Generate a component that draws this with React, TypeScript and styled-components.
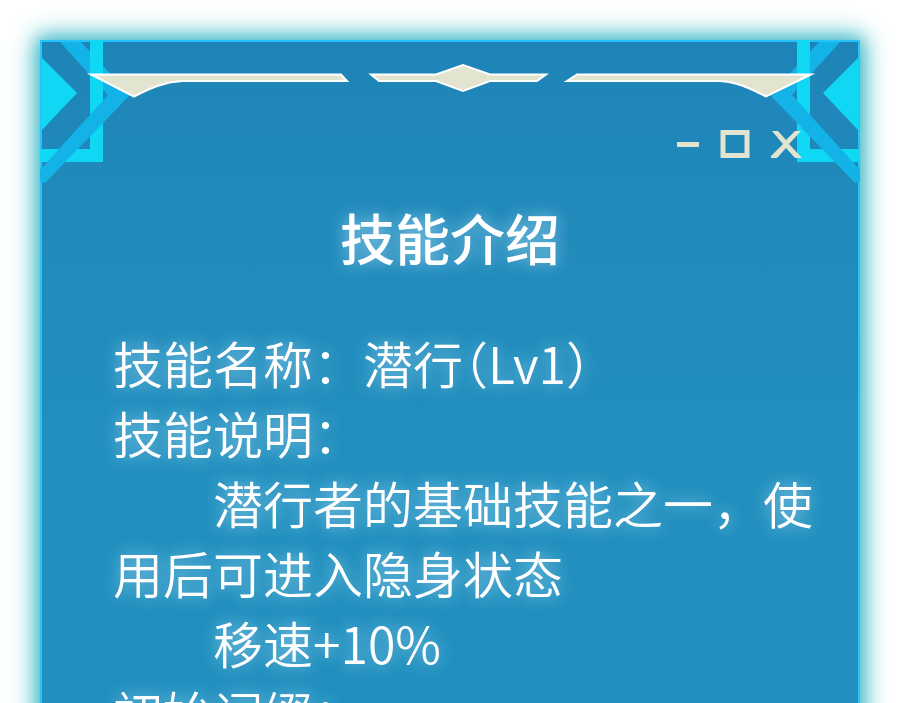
import React from "react";
import styled, { createGlobalStyle } from "styled-components";

const CREAM = "#e3e4d0";

const GlobalStyle = createGlobalStyle`
  * { box-sizing: border-box; }
  body {
    margin: 0;
    background: #ffffff;
    font-family: "Noto Sans CJK SC", "Noto Sans", sans-serif;
  }
`;

const Page = styled.div`
  height: 100vh;
  padding: 40px 40px 0;
  overflow: hidden;
`;

const Panel = styled.main`
  position: relative;
  min-height: 100vh;
  border: 2px solid #25c3fa;
  background: linear-gradient(#1e84b7 0, #208abb 160px, #2190bf 420px);
  box-shadow:
    0 0 12px 2px rgba(60, 175, 190, 0.5),
    0 0 24px 4px #3fbecd;
`;

const Corner = styled.svg<{ $flipped?: boolean }>`
  position: absolute;
  top: -2px;
  ${(p) => (p.$flipped ? "right: -2px;" : "left: -2px;")}
  width: 96px;
  height: 148px;
  transform: ${(p) => (p.$flipped ? "scaleX(-1)" : "none")};
`;

const Header = styled.header`
  position: relative;
  display: flex;
  flex-direction: column;
  padding: 20px 42px 0;
`;

const Ornament = styled.svg`
  display: block;
  width: 100%;
  overflow: visible;
`;

const Controls = styled.div`
  display: flex;
  justify-content: flex-end;
  gap: 20px;
  margin-top: 28px;
  padding-right: 14px;
`;

const ControlButton = styled.button<{ $width: number }>`
  display: flex;
  align-items: center;
  justify-content: center;
  width: ${(p) => p.$width}px;
  height: 32px;
  padding: 0;
  border: 0;
  background: none;
  cursor: pointer;
`;

const Title = styled.h1`
  margin: 41px 0 0;
  color: #ffffff;
  font-size: 55px;
  font-weight: 500;
  line-height: 70px;
  text-align: center;
  text-shadow: 0 0 16px rgba(190, 230, 250, 0.7);
`;

const Body = styled.section`
  padding: 56px 44px 40px 71px;
  color: #ffffff;
  font-size: 50px;
  font-weight: 350;
  line-height: 70px;
  text-shadow: 0 0 16px rgba(190, 230, 250, 0.7);
`;

const Line = styled.p<{ $indent?: boolean }>`
  margin: 0;
  text-indent: ${(p) => (p.$indent ? "2em" : "0")};
`;

const HalfWidth = styled.span`
  font-feature-settings: "halt";
`;

function CornerArt({ flipped }: { flipped?: boolean }) {
  return (
    <Corner $flipped={flipped} viewBox="0 0 96 148" aria-hidden="true">
      <path d="M20 2H41L90 55H68Z" fill="#13b3e8" />
      <path d="M1 17L37 53L1 91Z" fill="#10d8f4" />
      <path d="M50 0H63V122H0V109H50Z" fill="#10d8f4" />
      <path d="M68 55H90L5 143L0 141V130Z" fill="#13b3e8" />
    </Corner>
  );
}

export default function App() {
  return (
    <>
      <GlobalStyle />
      <Page lang="zh-CN">
        <Panel>
          <CornerArt />
          <CornerArt flipped />
          <Header>
            <Ornament viewBox="84 62 732 38" aria-hidden="true">
              <g fill={CREAM} stroke="#ffffff" strokeWidth="2" strokeMiterlimit="10">
                <path d="M91 74.5H341L347 81H182C164 82 150 88 134 96.5Z" />
                <path d="M371 74.5H436L463 65L490 74.5H546L537 81H490L463 91L436 81H379Z" />
                <path d="M811 74.5H577L567 81H719C737 82 750 88 766 96.5Z" />
              </g>
            </Ornament>
            <Controls>
              <ControlButton type="button" aria-label="最小化" $width={24}>
                <svg width="24" height="32" viewBox="0 0 24 32">
                  <path d="M1 16.5H23" stroke={CREAM} strokeWidth="5" />
                </svg>
              </ControlButton>
              <ControlButton type="button" aria-label="最大化" $width={30}>
                <svg width="30" height="32" viewBox="0 0 30 32">
                  <rect x="3" y="4.5" width="24" height="23" fill="none" stroke={CREAM} strokeWidth="5" />
                </svg>
              </ControlButton>
              <ControlButton type="button" aria-label="关闭" $width={32}>
                <svg width="32" height="32" viewBox="0 0 32 32">
                  <path
                    d="M2 3H8L16 12L25 3H31L19 16L32 30H25L16 20L7 30H1V28L13 16Z"
                    fill={CREAM}
                  />
                </svg>
              </ControlButton>
            </Controls>
          </Header>
          <Title>技能介绍</Title>
          <Body>
            <Line>
              技能名称：潜行<HalfWidth>（</HalfWidth>Lv1<HalfWidth>）</HalfWidth>
            </Line>
            <Line>技能说明：</Line>
            <Line $indent>潜行者的基础技能之一，使用后可进入隐身状态</Line>
            <Line $indent>移速+10%</Line>
            <Line>初始词缀：</Line>
          </Body>
        </Panel>
      </Page>
    </>
  );
}
